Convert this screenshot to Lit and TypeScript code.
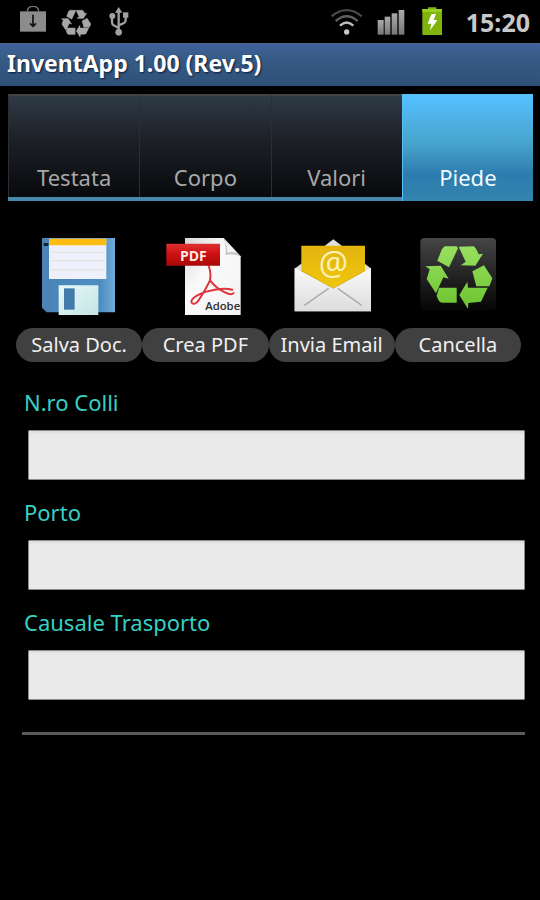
import { LitElement, html, css, svg } from "lit";
import { customElement, state } from "lit/decorators.js";
import { classMap } from "lit/directives/class-map.js";

const bagIcon = svg`<svg width="28" height="31" viewBox="57 18 84 93" aria-hidden="true">
  <path d="M82 34 C84 14 114 14 116 34" fill="none" stroke="#777" stroke-width="4"/>
  <path d="M60 34 H138 V95 H60 Z" fill="#8c8c8c"/>
  <path d="M99 44 V78 M90 70 L99 79 L108 70" fill="none" stroke="#111" stroke-width="5"/>
</svg>`;

const arrows = svg`
  <path d="M149 64 L185 64 L189 70 L162 127 L127 107 L141 72 Z"/>
  <path d="M191 65 L235 64 Q242 66 251 88 L264 86 L241 122 L197 121 L212 110 Z"/>
  <path d="M232 139 L267 121 L292 160 L283 184 L244 184 Z"/>
  <path d="M193 210 L217 170 L219 188 L278 188 L258 230 L220 234 L219 252 Z"/>
  <path d="M132 188 L185 188 L185 233 L140 233 Q130 230 125 212 Z"/>
  <path d="M91 124 L137 122 L161 161 L145 157 L123 205 L95 162 L104 133 Z"/>`;

const recycleSmall = svg`<svg width="30" height="31" viewBox="183 18 90 93" aria-hidden="true">
  <g fill="#a8a8a8" stroke="#a8a8a8" stroke-width="3" transform="translate(144 3) scale(.44 .43)">${arrows}</g>
</svg>`;

const usbIcon = svg`<svg width="24" height="31" viewBox="315 18 72 93" aria-hidden="true">
  <g fill="none" stroke="#a0a0a0" stroke-width="7">
    <path d="M356 98 V30"/>
    <path d="M356 84 L341 76 Q336 73 336 66 V52"/>
    <path d="M356 76 L372 69 Q377 66 377 60 V48"/>
  </g>
  <g fill="#a0a0a0"><path d="M345 38 L356 21 L367 38 Z"/><circle cx="356" cy="97" r="10"/>
  <circle cx="337" cy="48" r="9"/><path d="M369 37 H385 V53 H369 Z"/></g>
</svg>`;

const wifiIcon = svg`<svg width="32" height="31" viewBox="183 18 96 93" aria-hidden="true">
  <g fill="none" stroke-width="7">
    <path d="M185 49 Q230 12 275 49" stroke="#484848"/>
    <path d="M197 63 Q230 34 263 63" stroke="#606060"/>
    <path d="M210 77 Q230 58 250 77" stroke="#c0c0c0"/>
  </g>
  <circle cx="230" cy="96" r="8" fill="#c8c8c8"/>
</svg>`;

const signalIcon = svg`<svg width="28" height="31" viewBox="318 18 84 93" aria-hidden="true">
  <defs><linearGradient id="bar" x2="0" y2="1"><stop stop-color="#aaa"/><stop offset="1" stop-color="#777"/></linearGradient></defs>
  <g fill="url(#bar)"><path d="M320 60h18v44h-18z"/><path d="M341 50h17v54h-17z"/><path d="M362 40h17v64h-17z"/><path d="M383 30h17v74h-17z"/></g>
</svg>`;

const batteryIcon = svg`<svg width="24" height="31" viewBox="447 18 72 93" aria-hidden="true">
  <path d="M457 27 H474 V22 H499 V27 H516 V105 H457 Z" fill="#80b40c"/>
  <path d="M457 27 H516 V36 H457 Z" fill="#98cc20"/>
  <path d="M484 43 L498 41 L491 60 L502 61 L480 91 L484 71 L473 71 Z" fill="#fff"/>
</svg>`;

const floppyIcon = svg`<svg viewBox="60 39 234 234" aria-hidden="true">
  <defs>
    <linearGradient id="body" x2="1" y2="0"><stop stop-color="#4a83b6"/><stop offset=".8" stop-color="#4d8dc2"/><stop offset="1" stop-color="#72acd8"/></linearGradient>
    <linearGradient id="shutter" x2="1" y2="1"><stop stop-color="#e8f8f8"/><stop offset="1" stop-color="#c4e4e4"/></linearGradient>
  </defs>
  <path d="M66 39 H285 V262 H80 L66 248 Z" fill="url(#body)"/>
  <path d="M71 54h14v9h-14z" fill="#102438"/>
  <path d="M87 41 H259 V162 H87 Z" fill="#eef0fb"/>
  <path d="M87 41 H259 V61 H87 Z" fill="#fcbd10"/>
  <path d="M93 82H253M93 107H253M93 134H253" stroke="#e6e2dc" stroke-width="4"/>
  <path d="M116 181 H235 V270 H116 Z" fill="url(#shutter)"/>
  <path d="M132 190 H164 V254 H132 Z" fill="#437aaa"/>
</svg>`;

const pdfIcon = svg`<svg viewBox="63 39 234 234" aria-hidden="true">
  <defs>
    <linearGradient id="sheet" x2="1" y2="1"><stop stop-color="#d8d8d8"/><stop offset=".4" stop-color="#fafafa"/><stop offset="1" stop-color="#f2f2f2"/></linearGradient>
    <linearGradient id="red" x2="0" y2="1"><stop stop-color="#e03030"/><stop offset=".5" stop-color="#cc1010"/><stop offset="1" stop-color="#a80808"/></linearGradient>
  </defs>
  <path d="M120 39 H236 L287 94 V270 H120 Z" fill="url(#sheet)"/>
  <path d="M236 39 L287 94 Q262 84 241 90 Q246 62 236 39 Z" fill="#c4c4c4"/>
  <path d="M238 44 L276 83 Q258 79 247 83 Q248 62 238 44 Z" fill="#f4f4f4"/>
  <g fill="none" stroke="#e0343c" stroke-width="6" stroke-linecap="round">
    <path d="M190 120 C196 135 198 150 195 166 C186 186 172 208 162 224 C154 238 141 240 139 230 C140 218 164 206 184 200 C212 192 240 188 262 194"/>
    <path d="M195 166 C206 180 222 194 240 202 C250 207 262 209 266 204"/>
  </g>
  <path d="M64 56 H225 V122 H64 Z" fill="url(#red)"/>
  <text class="pdf" x="145" y="107" text-anchor="middle" fill="#fde8e4">PDF</text>
  <text class="adobe" x="233" y="255" text-anchor="middle" fill="#303030">Adobe</text>
</svg>`;

const mailIcon = svg`<svg viewBox="69 39 234 234" aria-hidden="true">
  <defs>
    <linearGradient id="gold" x2="0" y2="1"><stop stop-color="#e2b410"/><stop offset="1" stop-color="#f2c80c"/></linearGradient>
    <linearGradient id="paper" x2="0" y2="1"><stop stop-color="#fafafa"/><stop offset="1" stop-color="#dcdcdc"/></linearGradient>
  </defs>
  <path d="M74 131 L190 43 L304 131 V259 H74 Z" fill="#dedede"/>
  <path d="M94 62 H285 V142 L190 198 L94 142 Z" fill="url(#gold)"/>
  <path d="M74 128 L190 190 L304 128 V259 H74 Z" fill="url(#paper)"/>
  <path d="M103 241 L176 190 M275 241 L203 190" stroke="#aaa" stroke-width="4"/>
  <path d="M94 137 L190 190 L285 137" fill="none" stroke="#c9a51a" stroke-width="2"/>
  <text class="at" x="190" y="149" text-anchor="middle" fill="#fdf2b8">@</text>
</svg>`;

const recycleIcon = svg`<svg viewBox="72 39 234 234" aria-hidden="true">
  <defs>
    <linearGradient id="tile" x2="0" y2="1"><stop stop-color="#464646"/><stop offset=".5" stop-color="#242424"/><stop offset="1" stop-color="#050505"/></linearGradient>
    <linearGradient id="green" x1="0" y1="64" x2="0" y2="252" gradientUnits="userSpaceOnUse"><stop stop-color="#98e060"/><stop offset="1" stop-color="#6cc430"/></linearGradient>
  </defs>
  <rect x="76" y="39" width="227" height="218" rx="12" fill="url(#tile)"/>
  <g fill="url(#green)">${arrows}</g>
</svg>`;

@customElement("app-root")
export class AppRoot extends LitElement {
  @state() private active = "Piede";

  private tabs = ["Testata", "Corpo", "Valori", "Piede"];
  private actions = [
    { label: "Salva Doc.", icon: floppyIcon },
    { label: "Crea PDF", icon: pdfIcon },
    { label: "Invia Email", icon: mailIcon },
    { label: "Cancella", icon: recycleIcon },
  ];
  private fields = [
    { id: "colli", label: "N.ro Colli" },
    { id: "porto", label: "Porto" },
    { id: "causale", label: "Causale Trasporto" },
  ];

  static styles = css`
    :host { display: block; min-height: 100vh; background: #000; color: #fff;
      font-family: "Noto Sans", "Open Sans", sans-serif; }
    * { box-sizing: border-box; }
    svg { display: block; }
    button { font: inherit; border: 0; padding: 0; background: none; color: inherit; cursor: pointer; }
    .status { display: flex; align-items: center; gap: 14px; height: 43px; padding: 0 10px 0 19px; }
    .spacer { flex: 1; }
    .time { font-size: 25px; font-weight: 700; line-height: 32px; color: #c8c8c8; margin-left: 9px; }
    .title { margin: 0; height: 43px; padding: 0 7px; font-size: 23px; line-height: 39px; font-weight: 700;
      text-shadow: 1px 1px 2px #0a1a34; border-top: 1px solid #52668c;
      background: linear-gradient(#40629c, #385c88 30%, #2e5078); }
    .tabs { display: flex; margin: 8px 7px 0 8px; height: 107px; border-bottom: 4px solid #4488ac; }
    .tab { flex: 1; display: flex; align-items: flex-end; justify-content: center; padding-bottom: 4px;
      font-size: 22px; line-height: 32px; color: #a8a8a8; border-top: 2px solid #444448;
      border-left: 1px solid #2c2e30; background: linear-gradient(#2e3a46, #1c2026 45%, #08090c); }
    .tab.active { margin-bottom: -4px; padding-bottom: 8px; color: #f0faff; border-color: #58c0f8;
      background: linear-gradient(#54c0ff, #48a4cc 45%, #2c7cae 75%, #3484b0); }
    .actions { display: flex; margin: 37px 19px 0 16px; }
    .action { flex: 1; display: flex; flex-direction: column; align-items: center; gap: 12px; }
    .action svg { width: 78px; height: 78px; }
    .pill { align-self: stretch; height: 34px; border-radius: 17px; background: #404040; color: #f0f0f0;
      font-size: 20px; line-height: 34px; white-space: nowrap; }
    .pdf { font: 700 42px "Open Sans", sans-serif; }
    .adobe { font: 600 34px "Open Sans", sans-serif; }
    .at { font: 500 98px "Open Sans", sans-serif; }
    .form { padding: 24px 15px 0 22px; }
    .field { display: flex; flex-direction: column; margin-bottom: 16px; }
    .field label { font-size: 22px; line-height: 32px; margin-bottom: 12px; padding-left: 2px; color: #38d0c4; }
    .field input { margin-left: 6px; height: 50px; border: 1px solid #8a8a8a; border-radius: 1px; padding: 0 10px;
      font: inherit; font-size: 22px; color: #111; background: linear-gradient(#dcdcdc, #eaeaea 8%); }
    .rule { border: 0; height: 3px; margin: 32px 0 0; background: #5a5a5a; }
  `;

  render() {
    return html`
      <div class="status">
        ${bagIcon}${recycleSmall}${usbIcon}
        <span class="spacer"></span>
        ${wifiIcon}${signalIcon}${batteryIcon}
        <span class="time">15:20</span>
      </div>
      <h1 class="title">InventApp 1.00 (Rev.5)</h1>
      <nav class="tabs" role="tablist">
        ${this.tabs.map((t) => html`<button role="tab" aria-selected=${t === this.active}
          class=${classMap({ tab: true, active: t === this.active })}
          @click=${() => (this.active = t)}>${t}</button>`)}
      </nav>
      <div class="actions">
        ${this.actions.map((a) => html`<button class="action">${a.icon}<span class="pill">${a.label}</span></button>`)}
      </div>
      <form class="form">
        ${this.fields.map((f) => html`<div class="field">
          <label for=${f.id}>${f.label}</label><input id=${f.id} type="text" />
        </div>`)}
        <hr class="rule" />
      </form>
    `;
  }
}
